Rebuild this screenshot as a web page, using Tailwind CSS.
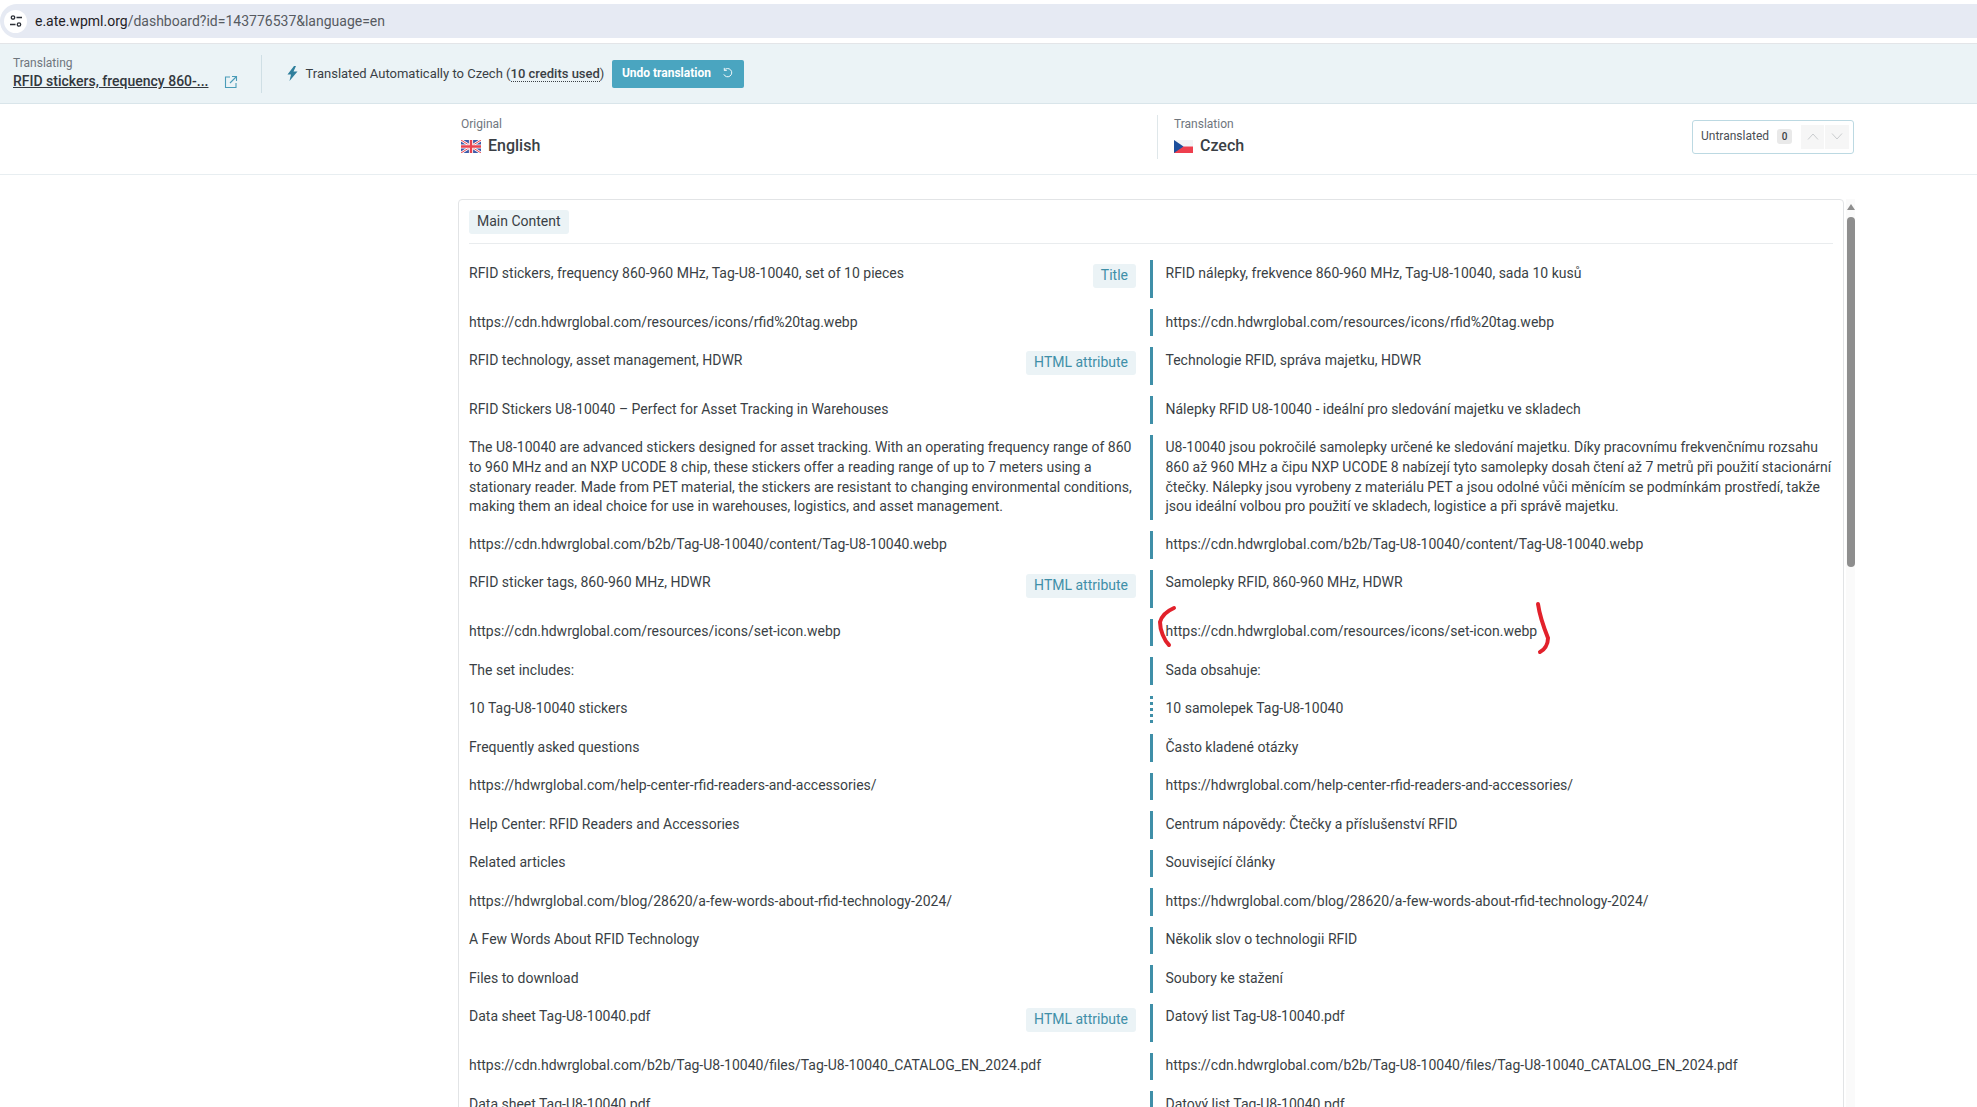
<!DOCTYPE html>
<html lang="en">
<head>
    <meta charset="UTF-8">
    <title>WPML Advanced Translation Editor</title>
    <script src="https://cdn.jsdelivr.net/npm/@tailwindcss/browser@4"></script>
</head>
<body class="bg-white">
    <div class="relative h-[1107px] overflow-hidden font-[Roboto,sans-serif] text-[14px] leading-[19.6px] text-[#3a3f45]">
        <!-- Browser address bar -->
        <div class="h-[44px] pt-[4px] border-b border-[#e3e5e8]">
            <div class="h-[34px] bg-[#e6eaf3] rounded-l-[17px] flex items-center pl-[4px]">
                <div class="w-[23px] h-[23px] bg-white rounded-full flex items-center justify-center">
                    <svg width="14" height="14" viewBox="0 0 14 14" fill="none" stroke="#2b2f36" stroke-width="1.3"><circle cx="4" cy="3.5" r="1.7"/><path d="M7.5 3.5H13M1 10.5h5.500"/><circle cx="10" cy="10.5" r="1.7"/></svg>
                </div>
                <div class="ml-[8px] pt-[2px] text-[14px] text-[#565a61]"><span class="text-[#1f2125]">e.ate.wpml.org</span>/dashboard?id=143776537&amp;language=en</div>
            </div>
        </div>

        <!-- Translating banner -->
        <div class="h-[60px] bg-[#ebf3f6] border-b border-[#d9e5ea] flex items-center pl-[13px]">
            <div class="w-[248px]">
                <div class="text-[12px] leading-[16px] text-[#6f767d]">Translating</div>
                <div class="flex items-center mt-[1px]">
                    <span class="font-medium underline text-[#33383e] w-[211px]">RFID stickers, frequency 860-...</span>
                    <svg width="14" height="14" viewBox="0 0 14 14" fill="none" stroke="#4a9cb8" stroke-width="1.1"><path d="M6 2H1.500v10.500H12V8M8 1.500h4.500V6M12.500 1.500 6 8"/></svg>
                </div>
            </div>
            <div class="w-px h-[38px] bg-[#cfdfe5]"></div>
            <svg class="ml-[25px]" width="11" height="15" viewBox="0 0 11 15" fill="#2f7f9c"><path d="M7 0 .5 8.500H4L2.500 15l8-9.500H6.500L9 0z"/></svg>
            <span class="ml-[7.5px] text-[13px] text-[#3a3f45]">Translated Automatically to Czech (<span class="font-medium border-b border-dotted border-[#3a3f45]">10 credits used</span>)</span>
            <button class="ml-[7.5px] w-[132px] h-[28px] bg-[#4aa5c0] rounded-[2px] text-white text-[12px] font-bold flex items-center pl-[10px]">
                <span class="pt-px">Undo translation</span>
                <svg class="ml-[11px] -mt-[2px]" width="11" height="11" viewBox="0 0 12 12" fill="none" stroke="white" stroke-width="1"><path d="M2.500 3.500A4.500 4.500 0 1 1 2 8M2.500 1v2.700h2.700"/></svg>
            </button>
        </div>

        <!-- Language header -->
        <div class="h-[71px] border-b border-[#e8eef1] flex items-center pl-[461px] pr-[123px] pb-[5px]">
            <div class="w-[696px]">
                <div class="text-[12px] leading-[16px] text-[#6f767d]">Original</div>
                <div class="flex items-center mt-[3px] text-[16px] leading-[22px] font-medium">
                    <svg width="20" height="13" viewBox="0 0 20 13"><rect width="20" height="13" fill="#3d5aa8"/><path d="M0 0 20 13M20 0 0 13" stroke="white" stroke-width="2.600"/><path d="M0 0 20 13M20 0 0 13" stroke="#e8434f" stroke-width="1"/><path d="M10 0v13M0 6.500h20" stroke="white" stroke-width="4.200"/><path d="M10 0v13M0 6.500h20" stroke="#e8434f" stroke-width="2.400"/></svg>
                    <span class="ml-[7px]">English</span>
                </div>
            </div>
            <div class="w-px h-[44px] bg-[#dfe7ea]"></div>
            <div class="ml-[16px] flex-1">
                <div class="text-[12px] leading-[16px] text-[#6f767d]">Translation</div>
                <div class="flex items-center mt-[3px] text-[16px] leading-[22px] font-medium">
                    <svg width="19" height="13" viewBox="0 0 19 13"><rect width="19" height="6.500" fill="#f3f4f6"/><rect y="6.500" width="19" height="6.500" fill="#ee3f4e"/><path d="M0 0 9.500 6.500 0 13z" fill="#1c4f9c"/></svg>
                    <span class="ml-[7px]">Czech</span>
                </div>
            </div>
            <div class="w-[162px] h-[34px] border border-[#bcd9e2] rounded-[3px] flex items-center pl-[8px]">
                <span class="text-[12px] text-[#4a4f55]">Untranslated</span>
                <span class="ml-[8px] w-[15px] h-[15px] bg-[#e9e9e9] rounded-[3px] text-[10px] leading-[15px] text-center font-medium">0</span>
                <div class="ml-[9px] w-[24px] h-[24px] bg-[#f6f6f6] flex items-center justify-center border-r border-white">
                    <svg width="12" height="7" viewBox="0 0 12 7" fill="none" stroke="#c9ccce"><path d="M1 6.500 6 1l5 5.500"/></svg>
                </div>
                <div class="w-[24px] h-[24px] bg-[#f6f6f6] flex items-center justify-center">
                    <svg width="12" height="7" viewBox="0 0 12 7" fill="none" stroke="#c9ccce"><path d="M1 .5 6 6l5-5.500"/></svg>
                </div>
            </div>
        </div>

        <!-- Segments -->
        <div class="flex pl-[458px] pt-[24px]">
            <div class="w-[1386px] h-[1000px] border border-[#e2e4e6] rounded-t-[4px] pl-[10px] pt-[10px]">
                <div class="w-[1364px] h-[34px] border-b border-[#e9ecee]">
                    <span class="inline-block h-[24px] px-[8px] bg-[#ebf3f6] rounded-[3px] leading-[22px] text-[#3a3f45]">Main Content</span>
                </div>
                <div class="mt-[16px]">
                    <div class="flex min-h-[38px] mb-[11px]">
                        <div class="w-[667px] pt-[3.5px] flex justify-between items-start"><span>RFID stickers, frequency 860-960 MHz, Tag-U8-10040, set of 10 pieces</span><span class="mt-[0.5px] h-[24px] px-[8px] bg-[#ebf3f6] rounded-[3px] leading-[23px] text-[#3f8fa8]">Title</span></div>
                        <div class="ml-[13.5px] w-[682px] border-l-[3px] border-[#3f8fa8] pl-[13px] pt-[3.5px] pb-[4.4px]">RFID nálepky, frekvence 860-960 MHz, Tag-U8-10040, sada 10 kusů</div>
                    </div>
                    <div class="flex mb-[11px]">
                        <div class="w-[667px] pt-[3.5px]">https://cdn.hdwrglobal.com/resources/icons/rfid%20tag.webp</div>
                        <div class="ml-[13.5px] w-[682px] border-l-[3px] border-[#3f8fa8] pl-[13px] pt-[3.5px] pb-[4.4px]">https://cdn.hdwrglobal.com/resources/icons/rfid%20tag.webp</div>
                    </div>
                    <div class="flex min-h-[38px] mb-[11px]">
                        <div class="w-[667px] pt-[3.5px] flex justify-between items-start"><span>RFID technology, asset management, HDWR</span><span class="mt-[0.5px] h-[24px] px-[8px] bg-[#ebf3f6] rounded-[3px] leading-[23px] text-[#3f8fa8]">HTML attribute</span></div>
                        <div class="ml-[13.5px] w-[682px] border-l-[3px] border-[#3f8fa8] pl-[13px] pt-[3.5px] pb-[4.4px]">Technologie RFID, správa majetku, HDWR</div>
                    </div>
                    <div class="flex mb-[11px]">
                        <div class="w-[667px] pt-[3.5px]">RFID Stickers U8-10040 – Perfect for Asset Tracking in Warehouses</div>
                        <div class="ml-[13.5px] w-[682px] border-l-[3px] border-[#3f8fa8] pl-[13px] pt-[3.5px] pb-[4.4px]">Nálepky RFID U8-10040 - ideální pro sledování majetku ve skladech</div>
                    </div>
                    <div class="flex mb-[11px]">
                        <div class="w-[667px] pt-[3.5px]">The U8-10040 are advanced stickers designed for asset tracking. With an operating frequency range of 860 to 960 MHz and an NXP UCODE 8 chip, these stickers offer a reading range of up to 7 meters using a stationary reader. Made from PET material, the stickers are resistant to changing environmental conditions, making them an ideal choice for use in warehouses, logistics, and asset management.</div>
                        <div class="ml-[13.5px] w-[682px] border-l-[3px] border-[#3f8fa8] pl-[13px] pt-[3.5px] pb-[3.4px]">U8-10040 jsou pokročilé samolepky určené ke sledování majetku. Díky pracovnímu frekvenčnímu rozsahu 860 až 960 MHz a čipu NXP UCODE 8 nabízejí tyto samolepky dosah čtení až 7 metrů při použití stacionární čtečky. Nálepky jsou vyrobeny z materiálu PET a jsou odolné vůči měnícím se podmínkám prostředí, takže jsou ideální volbou pro použití ve skladech, logistice a při správě majetku.</div>
                    </div>
                    <div class="flex mb-[11px]">
                        <div class="w-[667px] pt-[3.5px]">https://cdn.hdwrglobal.com/b2b/Tag-U8-10040/content/Tag-U8-10040.webp</div>
                        <div class="ml-[13.5px] w-[682px] border-l-[3px] border-[#3f8fa8] pl-[13px] pt-[3.5px] pb-[4.4px]">https://cdn.hdwrglobal.com/b2b/Tag-U8-10040/content/Tag-U8-10040.webp</div>
                    </div>
                    <div class="flex min-h-[38px] mb-[11px]">
                        <div class="w-[667px] pt-[3.5px] flex justify-between items-start"><span>RFID sticker tags, 860-960 MHz, HDWR</span><span class="mt-[0.5px] h-[24px] px-[8px] bg-[#ebf3f6] rounded-[3px] leading-[23px] text-[#3f8fa8]">HTML attribute</span></div>
                        <div class="ml-[13.5px] w-[682px] border-l-[3px] border-[#3f8fa8] pl-[13px] pt-[3.5px] pb-[4.4px]">Samolepky RFID, 860-960 MHz, HDWR</div>
                    </div>
                    <div class="flex mb-[11px]">
                        <div class="w-[667px] pt-[3.5px]">https://cdn.hdwrglobal.com/resources/icons/set-icon.webp</div>
                        <div class="ml-[13.5px] w-[682px] border-l-[3px] border-[#3f8fa8] pl-[13px] pt-[3.5px] pb-[4.4px]">https://cdn.hdwrglobal.com/resources/icons/set-icon.webp</div>
                    </div>
                    <div class="flex mb-[11px]">
                        <div class="w-[667px] pt-[3.5px]">The set includes:</div>
                        <div class="ml-[13.5px] w-[682px] border-l-[3px] border-[#3f8fa8] pl-[13px] pt-[3.5px] pb-[4.4px]">Sada obsahuje:</div>
                    </div>
                    <div class="flex mb-[11px]">
                        <div class="w-[667px] pt-[3.5px]">10 Tag-U8-10040 stickers</div>
                        <div class="ml-[13.5px] w-[682px] border-l-[3px] border-dotted border-[#3f8fa8] pl-[13px] pt-[3.5px] pb-[4.4px]">10 samolepek Tag-U8-10040</div>
                    </div>
                    <div class="flex mb-[11px]">
                        <div class="w-[667px] pt-[3.5px]">Frequently asked questions</div>
                        <div class="ml-[13.5px] w-[682px] border-l-[3px] border-[#3f8fa8] pl-[13px] pt-[3.5px] pb-[4.4px]">Často kladené otázky</div>
                    </div>
                    <div class="flex mb-[11px]">
                        <div class="w-[667px] pt-[3.5px]">https://hdwrglobal.com/help-center-rfid-readers-and-accessories/</div>
                        <div class="ml-[13.5px] w-[682px] border-l-[3px] border-[#3f8fa8] pl-[13px] pt-[3.5px] pb-[4.4px]">https://hdwrglobal.com/help-center-rfid-readers-and-accessories/</div>
                    </div>
                    <div class="flex mb-[11px]">
                        <div class="w-[667px] pt-[3.5px]">Help Center: RFID Readers and Accessories</div>
                        <div class="ml-[13.5px] w-[682px] border-l-[3px] border-[#3f8fa8] pl-[13px] pt-[3.5px] pb-[4.4px]">Centrum nápovědy: Čtečky a příslušenství RFID</div>
                    </div>
                    <div class="flex mb-[11px]">
                        <div class="w-[667px] pt-[3.5px]">Related articles</div>
                        <div class="ml-[13.5px] w-[682px] border-l-[3px] border-[#3f8fa8] pl-[13px] pt-[3.5px] pb-[4.4px]">Související články</div>
                    </div>
                    <div class="flex mb-[11px]">
                        <div class="w-[667px] pt-[3.5px]">https://hdwrglobal.com/blog/28620/a-few-words-about-rfid-technology-2024/</div>
                        <div class="ml-[13.5px] w-[682px] border-l-[3px] border-[#3f8fa8] pl-[13px] pt-[3.5px] pb-[4.4px]">https://hdwrglobal.com/blog/28620/a-few-words-about-rfid-technology-2024/</div>
                    </div>
                    <div class="flex mb-[11px]">
                        <div class="w-[667px] pt-[3.5px]">A Few Words About RFID Technology</div>
                        <div class="ml-[13.5px] w-[682px] border-l-[3px] border-[#3f8fa8] pl-[13px] pt-[3.5px] pb-[4.4px]">Několik slov o technologii RFID</div>
                    </div>
                    <div class="flex mb-[11px]">
                        <div class="w-[667px] pt-[3.5px]">Files to download</div>
                        <div class="ml-[13.5px] w-[682px] border-l-[3px] border-[#3f8fa8] pl-[13px] pt-[3.5px] pb-[4.4px]">Soubory ke stažení</div>
                    </div>
                    <div class="flex min-h-[38px] mb-[11px]">
                        <div class="w-[667px] pt-[3.5px] flex justify-between items-start"><span>Data sheet Tag-U8-10040.pdf</span><span class="mt-[0.5px] h-[24px] px-[8px] bg-[#ebf3f6] rounded-[3px] leading-[23px] text-[#3f8fa8]">HTML attribute</span></div>
                        <div class="ml-[13.5px] w-[682px] border-l-[3px] border-[#3f8fa8] pl-[13px] pt-[3.5px] pb-[4.4px]">Datový list Tag-U8-10040.pdf</div>
                    </div>
                    <div class="flex mb-[11px]">
                        <div class="w-[667px] pt-[3.5px]">https://cdn.hdwrglobal.com/b2b/Tag-U8-10040/files/Tag-U8-10040_CATALOG_EN_2024.pdf</div>
                        <div class="ml-[13.5px] w-[682px] border-l-[3px] border-[#3f8fa8] pl-[13px] pt-[3.5px] pb-[4.4px]">https://cdn.hdwrglobal.com/b2b/Tag-U8-10040/files/Tag-U8-10040_CATALOG_EN_2024.pdf</div>
                    </div>
                    <div class="flex mb-[11px]">
                        <div class="w-[667px] pt-[3.5px]">Data sheet Tag-U8-10040.pdf</div>
                        <div class="ml-[13.5px] w-[682px] border-l-[3px] border-[#3f8fa8] pl-[13px] pt-[3.5px] pb-[4.4px]">Datový list Tag-U8-10040.pdf</div>
                    </div>
                </div>
            </div>
            <!-- Scrollbar -->
            <div class="ml-[2px] w-[9px] bg-[#fafafa] flex flex-col items-center pt-[5px]">
                <div class="w-0 h-0 border-x-[4px] border-x-transparent border-b-[6px] border-b-[#8e8e8e]"></div>
                <div class="mt-[7px] w-[8px] h-[350px] bg-[#8e8e8e] rounded-full"></div>
            </div>
        </div>

        <!-- Red pen marks drawn over the screenshot -->
        <svg class="absolute left-0 top-0 pointer-events-none" width="1977" height="1107" fill="none" stroke="#e2212b" stroke-width="4" stroke-linecap="round" stroke-linejoin="round">
            <path d="M1174 608C1167 611 1162 615 1160 622C1160 630 1164 640 1169 645"/>
            <path d="M1538 604C1540 618 1544 628 1548 638C1548 645 1544 650 1540 652"/>
        </svg>
    </div>
</body>
</html>
